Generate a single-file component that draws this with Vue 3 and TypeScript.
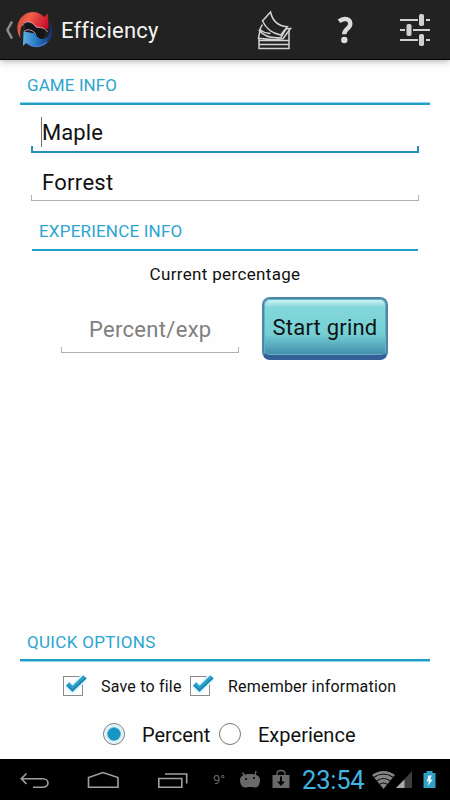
<script setup lang="ts">
import { ref } from 'vue'

const character = ref('Maple')
const server = ref('Forrest')
const mode = ref('Percent')
const modes = ['Percent', 'Experience']
const checks = ref([
  { label: 'Save to file', on: true, cls: 'save' },
  { label: 'Remember information', on: true, cls: 'remember' },
])
</script>

<template>
  <div class="screen">
    <header class="bar">
      <svg class="up" width="10" height="20" viewBox="0 0 10 20"><path d="M8 1.500L3.400 10l4.600 8.500" fill="none" stroke="#8b8b8b" stroke-width="2.600" /></svg>
      <svg class="logo" width="38" height="38" viewBox="0 0 38 38">
        <defs>
          <linearGradient id="red" x1="0" y1="0" x2="1" y2="0.4"><stop offset="0" stop-color="#c9402f" /><stop offset=".4" stop-color="#f2604b" /><stop offset="1" stop-color="#c80d2a" /></linearGradient>
          <linearGradient id="blue" x1="0" y1="0" x2="1" y2="0"><stop offset="0" stop-color="#62b2e4" /><stop offset=".5" stop-color="#2173bd" /><stop offset="1" stop-color="#1a2a68" /></linearGradient>
        </defs>
        <path d="M9 13C13 6 24 7 29 18c1 8-3 12-9 13C12 29 9 22 9 13z" fill="#151519" />
        <path d="M4.500 27C-1 19 1 9 8 4c7-5 15-3 20 2l4-3.500.5 15.500-12-1.500C16 10.500 9 8 5.800 14.500 3.800 19 4 23 4.500 27z" fill="url(#red)" />
        <path d="M33.500 10.500c5 8 3.500 17-3 22-7 5-15 4-20.500-.5L7 35 7.500 20.500l12 2c2.500 7 10 7.500 13.500 1 1.800-4.500 1.500-9 .5-13z" fill="url(#blue)" />
        <path d="M6 15C9 9 16 9.500 20 16c4 .5 9 .3 11.500 5M8 20.500c3-3 8-2 11.500 2" fill="none" stroke="#d9a6b5" stroke-width=".9" />
        <path d="M12 33c6 4 14 3 19-2" fill="none" stroke="#4778d8" stroke-width="1.300" />
      </svg>
      <h1>Efficiency</h1>
      <svg class="papers" width="36" height="40" viewBox="0 0 36 40" fill="none" stroke="#d4d4d4" stroke-width="1.500">
        <path d="M2 28v10.500h30V20.500" />
        <path d="M2 30.600h30M2 34.500h30" />
        <path d="M3.200 19.300L1.500 28.300c10 1.400 19 1.400 24.500.4L33.500 18.500l-5 .2" />
        <path d="M5.400 14.500L2.300 20.500c5.500 7 13 7.800 21.700 7l5.200-9M3.500 20c5 4 7 3 10 3.500" />
        <path d="M13.500 2c2 8.500 7.500 14.200 16.800 14.700l-6.800 8.400C14.500 23 8.500 17.500 5.500 11z" fill="#222" />
      </svg>
      <svg class="help" width="18" height="30" viewBox="0 0 18 30"><path d="M2 6.200C6.500 2.800 13.300 3.200 13.300 8.800c0 5-6.100 4.700-6.100 10.500" fill="none" stroke="#dcdcdc" stroke-width="4.400" /><circle cx="7.300" cy="25" r="3.200" fill="#dcdcdc" /></svg>
      <svg class="sliders" width="32" height="34" viewBox="0 0 32 34" fill="#d0d0d0">
        <path d="M0 6h18v2H0zM26 6h4v2h-4zM0 16h5v2H0zM13 16h17v2H13zM0 26h18v2H0zM26 26h4v2h-4z" />
        <rect x="19" y="1" width="5" height="12" rx="1.800" /><rect x="6.500" y="11" width="5" height="12" rx="1.800" /><rect x="19" y="21" width="5" height="12" rx="1.800" />
      </svg>
    </header>

    <main>
      <h2 class="game">GAME INFO</h2>
      <label class="field focused"><i class="caret"></i><span class="name">{{ character }}</span></label>
      <label class="field second"><span class="job">{{ server }}</span></label>
      <section class="details">
        <h2 class="exp">EXPERIENCE INFO</h2>
        <p><span>Current percentage</span></p>
        <div class="entry">
          <label class="field amount"><span>Percent/exp</span></label>
          <button type="button"><span>Start grind</span></button>
        </div>
      </section>
      <section class="options">
        <h2 class="quick">QUICK OPTIONS</h2>
        <div class="checks">
          <label v-for="c in checks" :key="c.label" :class="c.cls" @click="c.on = !c.on">
            <svg width="28" height="26" viewBox="0 0 28 26">
              <rect x="2.500" y="4.500" width="19" height="19" fill="#fff" stroke="#8a8a8a" />
              <g v-if="c.on">
                <path d="M6.500 12l5 5L23 5.500" fill="none" stroke="#dff4fc" stroke-width="8" />
                <path d="M6.500 11.800l5 5L24 4.800" fill="none" stroke="#2ba0cc" stroke-width="4.600" />
                <path d="M6.500 13.600l5 4.700L25 5.800" fill="none" stroke="#1682ad" stroke-width="1.200" />
              </g>
            </svg>
            <span>{{ c.label }}</span>
          </label>
        </div>
        <div class="radios">
          <label v-for="m in modes" :key="m" :class="'mode-' + m.toLowerCase()" @click="mode = m">
            <svg width="24" height="24" viewBox="0 0 24 24">
              <circle cx="12" cy="12" r="10.500" fill="#fff" stroke="#777" />
              <g v-if="mode === m"><circle cx="12" cy="12" r="9.500" fill="#d8f2fc" /><circle cx="12" cy="12" r="6.300" fill="#1696c5" stroke="#3184a8" stroke-width=".7" /></g>
            </svg>
            <span>{{ m }}</span>
          </label>
        </div>
      </section>
    </main>

    <footer>
      <svg class="keys" width="200" height="41" viewBox="0 0 200 41" fill="none" stroke="#a0a0a0" stroke-width="1.600">
        <path d="M33 28.200h9.500c7.300 0 7.300-8.500 0-8.500H21.500M26.500 14.500l-5.200 5.200 5.200 5.200" />
        <path d="M88.500 28.200v-9.700l14.500-5 15 5v9.700z" />
        <path d="M158.800 19.500h23v8.700h-23zM165 15h21.700v9.500" />
      </svg>
      <span class="temp">9°</span>
      <svg class="notices" width="54" height="41" viewBox="0 0 54 41">
        <g fill="#696969"><path d="M2 21c0-4 4-6 10-6s10 2 10 6-2 8-5.500 7.500c-3-.6-5.500-.6-8.500 0C4 29 2 25 2 21z" /><path d="M7 17L4.500 13.500M17 17l1-5" stroke="#696969" stroke-width="1.300" /><path d="M34.500 16h17v13h-17z" /></g>
        <g fill="#000"><circle cx="8" cy="20" r="1" /><circle cx="16" cy="19" r="1" /></g>
        <path d="M39 16v-1.500q0-3 4-3t4 3V16" fill="none" stroke="#696969" stroke-width="1.300" />
        <path d="M42 17.500h2v5h3l-4 4.500-4-4.500h3z" fill="#050505" />
      </svg>
      <time>23:54</time>
      <svg class="status" width="66" height="41" viewBox="0 0 66 41">
        <path d="M2 16q11.500-8 23 0L13.500 30z" fill="#858585" />
        <path d="M3.500 18.500q10-7 20 0M6.500 22q7-5 14 0M9.500 25.500q4-3 8 0" fill="none" stroke="#080808" stroke-width="1.200" />
        <path d="M26 29L42 12v17z" fill="#3d3d3d" /><path d="M26 29l8.500-8.500V29z" fill="#aaa" />
        <path d="M53.500 14h3v-2h6v2h3v15h-12z" fill="#329fc5" />
        <path d="M58.500 16.500h3.200l-1.500 4h2.500L57.800 27l1-4.500h-2z" fill="#e9faff" />
      </svg>
    </footer>
  </div>
</template>

<style>
body { margin: 0; }
</style>
<style scoped>
* { box-sizing: border-box; }
.screen { width: 450px; height: 800px; display: flex; flex-direction: column; background: #fefefe; font-family: Roboto, "Noto Sans", sans-serif; overflow: hidden; color: #111; white-space: nowrap; }
svg { display: block; flex: none; }
h1, h2, p { margin: 0; font-weight: 400; }
.bar { height: 60px; flex: none; display: flex; align-items: center; background: #222; border-bottom: 1px solid #050505; box-shadow: 0 1px 7px #aaa; padding-left: 4px; }
.logo { margin-left: 2px; }
h1 { width: 97px; margin-left: 7px; margin-top: 3px; font-size: 22px; line-height: 30px; letter-spacing: .2px; font-variant-ligatures: none; color: #f4f4f4; }
.papers { margin-left: 99px; }
.help { margin-left: 44px; }
.sliders { margin-left: 45px; margin-top: 1px; }
main { height: 699px; flex: none; display: flex; flex-direction: column; padding: 11px 20px 0; }
h2 { font-size: 17px; line-height: 28px; height: 34px; padding-left: 7px; border-bottom: 2px solid #239fc7; color: #2ca5d0; flex: none; box-shadow: 0 -1px 0 #8ed6ea inset; }
.game { letter-spacing: .1px; border-bottom: 2px solid #239fc7; box-shadow: inset 0 -1px #8ed6ea; }
.quick { letter-spacing: .32px; height: 33px; margin-bottom: 1px; box-shadow: 0 1px #8ed6ea; line-height: 29px; }
.field { display: flex; align-items: center; position: relative; margin: 0 11px; padding-left: 11px; height: 48px; font-size: 22px; padding-top: 7px; flex: none; }
.field::after { content: ""; position: absolute; left: 0; right: 0; bottom: 0; height: 5px; border: 1px solid #b0b0b0; border-top: 0; }
.focused::after { border: 2px solid #258fb8; border-top: 0; }
.caret { position: absolute; left: 10px; top: 12px; width: 1px; height: 30px; background: #777; }
.name { letter-spacing: .1px; }
.job { letter-spacing: .3px; }
.second { padding-top: 11px; }
.details { padding: 15px 12px 0; height: 427px; }
.exp { height: 35px; line-height: 30px; letter-spacing: .2px; box-shadow: none; }
p { height: 46px; display: flex; align-items: center; justify-content: center; font-size: 17px; letter-spacing: .34px; }
.entry { display: flex; padding-left: 29px; }
.amount { width: 178px; height: 56px; margin: 0; padding-left: 28px; padding-top: 8px; color: #808080; letter-spacing: .3px; }
button { width: 126px; height: 63px; margin-left: 23px; padding: 0; border: 2px solid #4b87a8; border-bottom: 5px solid #355f99; border-radius: 8px; background: linear-gradient(#d7f7f8 0, #83d7da 15%, #75d0d4 62%, #438bad 100%); box-shadow: inset 0 0 0 1px #69aec2; font: 400 22px Roboto, sans-serif; letter-spacing: .2px; color: #111; display: flex; align-items: center; justify-content: center; }
.checks, .radios { display: flex; align-items: center; }
.checks { height: 49px; padding-left: 41px; font-size: 16px; }
.checks label, .radios label { display: flex; align-items: center; }
.checks svg { margin-top: -3px; }
.checks span { margin-left: 12px; letter-spacing: .2px; }
.save { width: 127px; }
.radios { height: 47px; padding-left: 82px; font-size: 20px; }
.radios svg { margin-top: -2px; }
.radios span { margin-left: 16px; }
.mode-percent { width: 116px; }
footer { height: 41px; flex: none; display: flex; align-items: center; background: #000; }
.temp { width: 14px; margin-left: 13px; color: #686868; font-size: 13px; }
.notices { margin-left: 11px; }
time { margin-left: 10px; width: 62px; font-size: 25.500px; line-height: 41px; padding-top: 2px; letter-spacing: -.2px; color: #43b5e3; }
.status { margin-left: 6px; }
</style>
